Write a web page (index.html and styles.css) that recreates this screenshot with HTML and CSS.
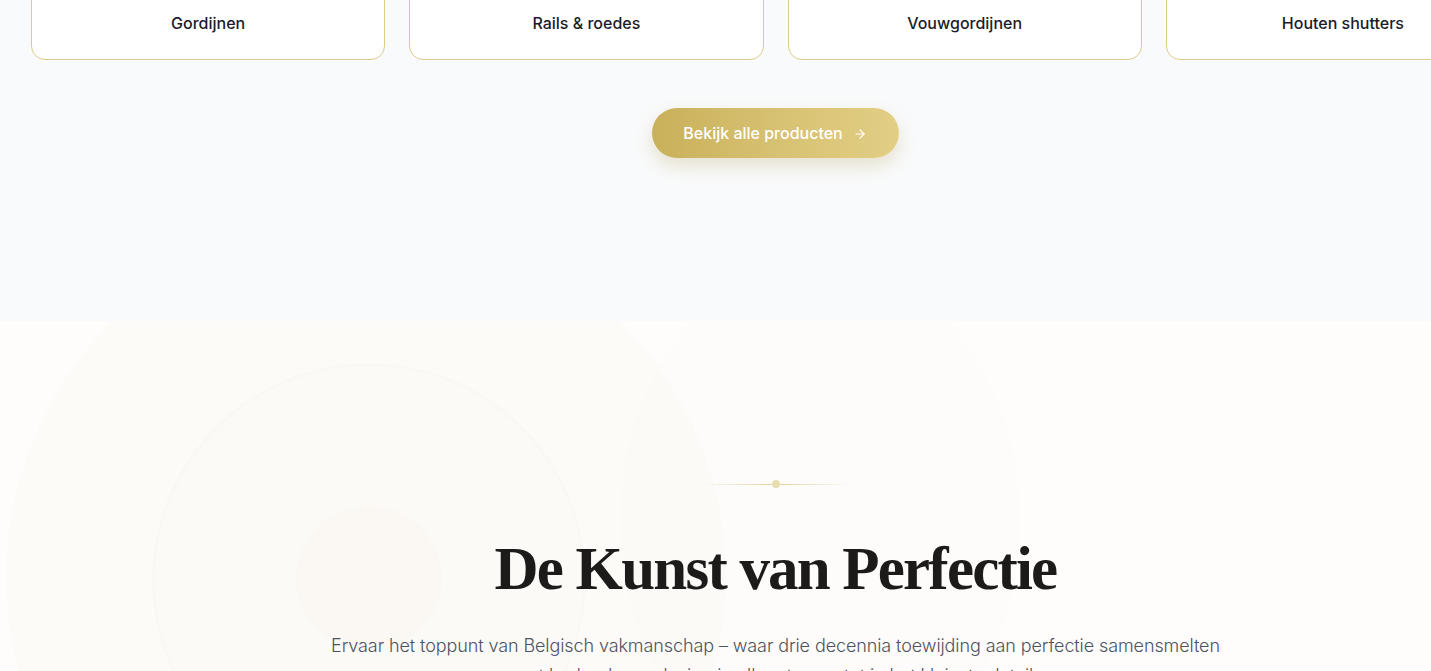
FILE: index.html
```html
<!DOCTYPE html>
<html lang="nl">
<head>
<meta charset="utf-8">
<title>Producten</title>
<link rel="stylesheet" href="styles.css">
</head>
<body>
<div class="page">
  <section class="products">
    <div class="cards">
      <a class="card"><span class="card-label">Gordijnen</span></a>
      <a class="card"><span class="card-label">Rails &amp; roedes</span></a>
      <a class="card"><span class="card-label">Vouwgordijnen</span></a>
      <a class="card"><span class="card-label">Houten shutters</span></a>
    </div>
    <div class="cta-row">
      <a class="cta">Bekijk alle producten
        <svg class="cta-arrow" width="14" height="14" viewBox="0 0 24 24" fill="none" stroke="currentColor" stroke-width="2" stroke-linecap="round" stroke-linejoin="round"><path d="M5 12h14"/><path d="M12 5l7 7-7 7"/></svg>
      </a>
    </div>
  </section>
  <section class="art">
    <div class="bg-circle c1"></div>
    <div class="bg-circle c2"></div>
    <div class="bg-circle c3"></div>
    <div class="bg-circle c4"></div>
    <div class="art-inner">
      <div class="divider"><span class="line"></span><span class="dot"></span><span class="line right"></span></div>
      <h2 class="art-title">De Kunst van Perfectie</h2>
      <p class="art-text">Ervaar het toppunt van Belgisch vakmanschap – waar drie decennia toewijding aan perfectie samensmelten met hedendaags design in elk ontwerp, tot in het kleinste detail.</p>
    </div>
  </section>
  <div class="top-fade"></div>
</div>
</body>
</html>
```
FILE: styles.css
```css
html, body {
  margin: 0;
  padding: 0;
  overflow: hidden;
}
body {
  font-family: Inter, "Noto Sans", sans-serif;
  background: #fefdfb;
}
.page {
  width: 1551px;
  position: relative;
}
.products {
  background: #f9fafb;
  margin-top: -58px;
  padding-bottom: 163px;
}
.cards {
  display: grid;
  grid-template-columns: repeat(4, 1fr);
  gap: 24px;
  padding: 0 31px;
}
.card {
  display: flex;
  justify-content: center;
  align-items: center;
  height: 118px;
  padding-top: 44px;
  box-sizing: border-box;
  background: #ffffff;
  border: 1px solid #decb8c;
  border-radius: 14px;
  color: #1b1b2b;
  font-size: 16px;
  font-weight: 500;
}
.cta-row {
  display: flex;
  justify-content: center;
  margin-top: 48px;
}
.cta {
  display: flex;
  align-items: center;
  gap: 10px;
  height: 50px;
  padding: 0 32px 0 31px;
  border-radius: 25px;
  background: linear-gradient(90deg, #c9b05a 0%, #d8c274 55%, #e2cf84 100%);
  color: #ffffff;
  font-size: 16px;
  font-weight: 500;
  box-shadow: 0 8px 18px rgba(180, 160, 90, 0.28);
}
.cta-arrow { margin-top: 1px; }
.art {
  position: relative;
  background: #fefdfb;
  height: 400px;
  overflow: hidden;
}
.bg-circle {
  position: absolute;
  border-radius: 50%;
}
.c1 {
  left: 6px; top: -104px; width: 720px; height: 720px;
  background: rgba(235, 228, 210, 0.06);
}
.c2 {
  left: 152px; top: 42px; width: 428px; height: 428px;
  border: 3px solid rgba(230, 225, 210, 0.08);
  background: rgba(235, 228, 210, 0.03);
}
.c3 {
  left: 296px; top: 184px; width: 146px; height: 146px;
  background: rgba(235, 228, 210, 0.07);
}
.c4 {
  left: 620px; top: -60px; width: 400px; height: 520px;
  background: rgba(240, 236, 226, 0.05);
}
.art-inner {
  position: relative;
  display: flex;
  flex-direction: column;
  align-items: center;
  padding-top: 159px;
}
.divider {
  display: flex;
  align-items: center;
  width: 150px;
}
.divider .line {
  flex: 1;
  height: 1px;
  background: linear-gradient(90deg, rgba(222, 206, 150, 0), rgba(222, 206, 150, 0.9));
}
.divider .line.right {
  background: linear-gradient(90deg, rgba(222, 206, 150, 0.9), rgba(222, 206, 150, 0));
}
.divider .dot {
  width: 8px;
  height: 8px;
  border-radius: 50%;
  background: #e6dcae;
}
.art-title {
  margin: 41px 0 0;
  font-family: "Liberation Serif", "DejaVu Serif", serif;
  font-weight: 700;
  font-size: 61px;
  line-height: 80px;
  color: #1c1b19;
  letter-spacing: -1.8px;
}
.art-text {
  margin: 22px 0 0;
  width: 900px;
  text-align: center;
  font-size: 18px;
  font-weight: 300;
  line-height: 30px;
  letter-spacing: -0.1px;
  color: #4e5361;
}
.top-fade {
  position: absolute;
  left: 0; right: 0; top: 0;
  height: 45px;
  background: linear-gradient(180deg, rgba(0, 0, 0, 0.05), rgba(0, 0, 0, 0));
  pointer-events: none;
}
```
